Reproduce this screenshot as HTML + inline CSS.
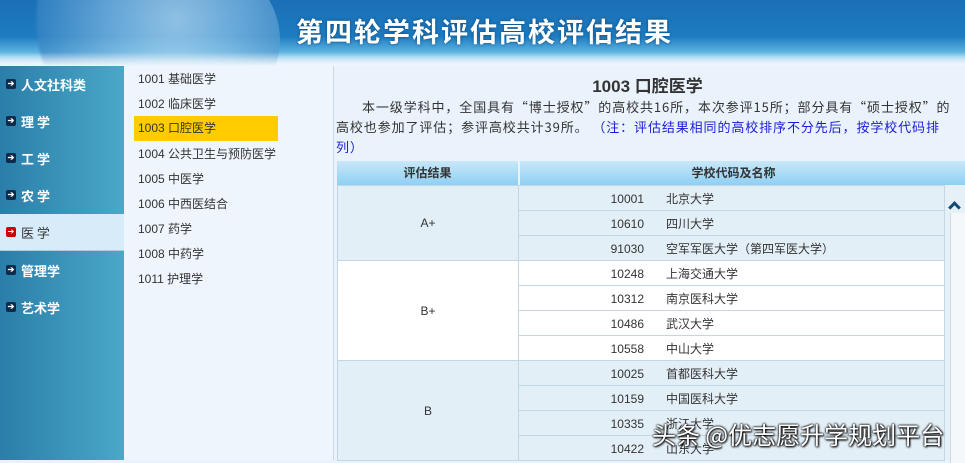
<!DOCTYPE html>
<html><head><meta charset="utf-8"><style>
*{margin:0;padding:0;box-sizing:border-box}
body{width:965px;height:460px;overflow:hidden;position:relative;background:#eaf3fb;font-family:"Liberation Sans","Noto Sans CJK SC",sans-serif;font-size:12px;color:#333}
.hd{position:absolute;left:0;top:0;width:965px;height:66px;background:linear-gradient(180deg,#1a6fb5 0%,#1e7cc0 55%,#5fb6e2 80%,#e8f4fb 100%);overflow:hidden}
.globe{position:absolute;left:20px;top:-60px;width:260px;height:200px;border-radius:50%;background:radial-gradient(circle at 60% 40%,#bfe0f5 0%,#7fb8e0 35%,#3a86c4 70%,transparent 72%);opacity:.7}
.hd h1{position:absolute;left:296px;top:11px;font-size:27px;letter-spacing:2px;color:#fff;font-weight:bold;font-family:"Noto Sans CJK SC",sans-serif;text-shadow:0 0 3px #0a4a80;white-space:nowrap}
.hd .fade{position:absolute;left:0;bottom:0;width:100%;height:14px;background:linear-gradient(180deg,rgba(255,255,255,0),#eef6fc)}
.nav{position:absolute;left:0;top:66px;width:124px;height:394px;background:linear-gradient(90deg,#2a7ea9,#4aa8c8)}
.nav div{position:absolute;left:0;width:124px;height:37px;line-height:37px;padding-left:21px;color:#fff;font-weight:bold;font-size:13px;font-family:"Noto Sans CJK SC",sans-serif}
.nav div:before{content:"➔";position:absolute;left:6px;top:13px;width:10px;height:10px;background:#0d2a4a;color:#fff;font-size:8px;line-height:10px;text-align:center;border-radius:2px}
.nav div.on{background:#d7ecf8;color:#333;font-weight:normal;border-bottom:1px solid #b7c9d3}
.nav div.on:before{background:#cc0000}
.mid{position:absolute;left:124px;top:66px;width:210px;height:394px;background:#eef5fc;border-right:1px solid #cdd9e4}
.mid div{position:absolute;left:10px;width:144px;height:25px;line-height:25px;padding-left:4px;font-size:12px;color:#333}
.mid div.on{background:#ffcc00}
.main{position:absolute;left:335px;top:66px;width:630px;height:394px;background:#eaf3fb}
.ttl{position:absolute;left:0;top:6px;width:625px;text-align:center;font-size:17px;font-weight:bold;color:#333}
.p{position:absolute;left:1px;top:31px;width:622px;font-size:13px;line-height:20px;text-indent:26px;color:#333;font-family:"Noto Sans CJK SC",sans-serif;letter-spacing:0.9px}
.p span{color:#1b1bd8}
.th{position:absolute;left:337px;top:161px;width:628px;height:24px;background:linear-gradient(180deg,#c8e8f8,#8fd0f3);font-weight:bold;line-height:24px}
.th div{position:absolute;top:0;text-align:center}
.th .s{position:absolute;left:181px;top:0;width:2px;height:24px;background:#eaf3fb}
table{position:absolute;left:2px;top:119px;width:608px;border-collapse:collapse;font-size:12px}
td{height:25px;border:1px solid #c3d6e3}
td.g{text-align:center;width:181px}
td.c{padding:0}
td.c b{display:inline-block;width:125px;text-align:right;font-weight:normal}
td.c i{font-style:normal;margin-left:22px}
.a td{background:#e3eff7}
.w td{background:#fff}
.sb{position:absolute;left:945px;top:185px;width:20px;height:275px;background:#e6f0f7}
.sb .ar{position:absolute;left:5px;top:18px;width:9px;height:9px;border-left:3px solid #124a7a;border-top:3px solid #124a7a;transform:rotate(45deg)}
.sb .tr{position:absolute;left:5px;top:28px;width:15px;height:250px;background:#f4f8fb;border-left:1px solid #cfdbe4}
.wm{position:absolute;left:652px;top:416px;font-size:24px;color:#fff;font-family:"Noto Sans CJK SC",sans-serif;text-shadow:0 0 2px #000,0 0 2px #000,1px 1px 2px #000;white-space:nowrap}
</style></head><body>
<div class="hd"><div class="globe"></div><h1>第四轮学科评估高校评估结果</h1><div class="fade"></div></div>
<div class="nav">
<div style="top:0">人文社科类</div><div style="top:37px">理 学</div><div style="top:74px">工 学</div><div style="top:111px">农 学</div><div class="on" style="top:148px">医 学</div><div style="top:186px">管理学</div><div style="top:223px">艺术学</div>
</div>
<div class="mid">
<div style="top:1px">1001 基础医学</div><div style="top:26px">1002 临床医学</div><div class="on" style="top:50px">1003 口腔医学</div><div style="top:76px">1004 公共卫生与预防医学</div><div style="top:101px">1005 中医学</div><div style="top:126px">1006 中西医结合</div><div style="top:151px">1007 药学</div><div style="top:176px">1008 中药学</div><div style="top:201px">1011 护理学</div>
</div>
<div class="main">
<div class="ttl">1003 口腔医学</div>
<div class="p">本一级学科中，全国具有“博士授权”的高校共16所，本次参评15所；部分具有“硕士授权”的高校也参加了评估；参评高校共计39所。 <span>（注：评估结果相同的高校排序不分先后，按学校代码排列）</span></div>
<table>
<tr class="a"><td class="g" rowspan="3">A+</td><td class="c"><b>10001</b><i>北京大学</i></td></tr>
<tr class="a"><td class="c"><b>10610</b><i>四川大学</i></td></tr>
<tr class="a"><td class="c"><b>91030</b><i>空军军医大学（第四军医大学）</i></td></tr>
<tr class="w"><td class="g" rowspan="4">B+</td><td class="c"><b>10248</b><i>上海交通大学</i></td></tr>
<tr class="w"><td class="c"><b>10312</b><i>南京医科大学</i></td></tr>
<tr class="w"><td class="c"><b>10486</b><i>武汉大学</i></td></tr>
<tr class="w"><td class="c"><b>10558</b><i>中山大学</i></td></tr>
<tr class="a"><td class="g" rowspan="4">B</td><td class="c"><b>10025</b><i>首都医科大学</i></td></tr>
<tr class="a"><td class="c"><b>10159</b><i>中国医科大学</i></td></tr>
<tr class="a"><td class="c"><b>10335</b><i>浙江大学</i></td></tr>
<tr class="a"><td class="c"><b>10422</b><i>山东大学</i></td></tr>
</table>
</div>
<div class="th"><div style="left:0;width:181px">评估结果</div><div class="s"></div><div style="left:183px;width:427px">学校代码及名称</div></div>
<div class="sb"><div class="ar"></div><div class="tr"></div></div>
<div class="wm">头条 @优志愿升学规划平台</div>
</body></html>
